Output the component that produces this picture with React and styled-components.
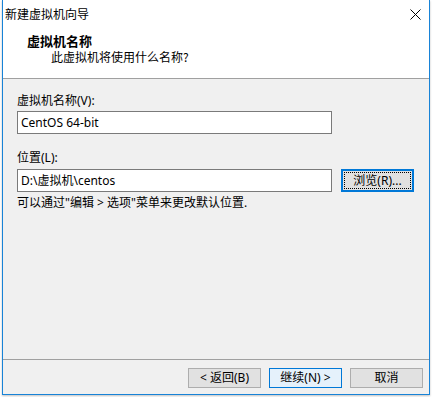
import React from "react";
import styled, { createGlobalStyle } from "styled-components";

const Global = createGlobalStyle`
  html, body { margin: 0; padding: 0; background: #ffffff; }
  body { font-family: "Noto Sans", "Noto Sans CJK SC", sans-serif; font-size: 12px; color: #000; }
  * { box-sizing: border-box; }
`;

const Page = styled.div`
  width: 432px;
  height: 397px;
  padding-left: 2px;
  background: #ffffff;
  overflow: hidden;
`;

const Window = styled.div`
  width: 428px;
  height: 395px;
  display: flex;
  flex-direction: column;
  border: 1px solid #1883d7;
  border-top: none;
  background: #f0f0f0;
  box-shadow: 0 1px 2px rgba(0, 0, 0, 0.25);
`;

const TitleBar = styled.div`
  height: 30px;
  flex: none;
  display: flex;
  align-items: center;
  justify-content: space-between;
  padding: 0 8px 2px 2px;
  background: #ffffff;
`;

const Title = styled.span`
  font-size: 12px;
  line-height: 14px;
  font-family: "Noto Sans CJK SC", sans-serif;
`;

const Header = styled.div`
  height: 49px;
  flex: none;
  background: #ffffff;
  border-bottom: 1px solid #a0a0a0;
  padding: 3px 0 0 24px;
  display: flex;
  flex-direction: column;
`;

const HeaderTitle = styled.div`
  font-family: "Noto Sans CJK SC", sans-serif;
  font-weight: 700;
  font-size: 13px;
  line-height: 16px;
`;

const HeaderSub = styled.div`
  font-family: "Noto Sans CJK SC", sans-serif;
  font-size: 12px;
  line-height: 16px;
  padding-left: 24px;
`;

const Body = styled.div`
  flex: 1;
  padding: 14px 0 0 14px;
  display: flex;
  flex-direction: column;
`;

const Label = styled.div`
  font-family: "Noto Sans", "Noto Sans CJK SC", sans-serif;
  font-size: 12px;
  line-height: 16px;
  height: 16px;
  margin-bottom: ${(p) => p.$mb || 2}px;
`;

const Row = styled.div`
  display: flex;
  align-items: center;
  gap: 9px;
`;

const Input = styled.div`
  width: 315px;
  height: 23px;
  border: 1px solid #7a7a7a;
  background: #ffffff;
  padding-left: 3px;
  display: flex;
  align-items: center;
  font-family: "Noto Sans", "Noto Sans CJK SC", sans-serif;
  font-size: 12px;
  line-height: 14px;
  margin-bottom: ${(p) => p.$mb || 0}px;
`;

const Button = styled.div`
  width: 73px;
  height: ${(p) => p.$h || 20}px;
  display: flex;
  align-items: center;
  justify-content: center;
  position: relative;
  background: ${(p) => (p.$primary ? "#e5f1fb" : "#e1e1e1")};
  border: ${(p) => (p.$focus ? "2px solid #0078d7" : p.$primary ? "1px solid #0078d7" : "1px solid #adadad")};
  font-family: "Noto Sans", "Noto Sans CJK SC", sans-serif;
  font-size: 12px;
  line-height: 14px;
`;

const FocusRect = styled.div`
  position: absolute;
  inset: 1px;
  border: 1px dotted #000;
`;

const Hint = styled.div`
  margin-top: 3px;
  font-family: "Noto Sans", "Noto Sans CJK SC", sans-serif;
  font-size: 12px;
  line-height: 16px;
`;

const Separator = styled.div`
  height: 1px;
  flex: none;
  background: #a0a0a0;
`;

const Footer = styled.div`
  height: 34px;
  flex: none;
  display: flex;
  justify-content: flex-end;
  align-items: flex-start;
  gap: 8px;
  padding: 8px 6px 0 0;
`;

/* access-key letter; Windows hides the underline until Alt is pressed */
const Mnemonic = styled.span`
  text-decoration: none;
`;

const CloseIcon = () => (
  <svg width="11" height="11" viewBox="0 0 11 11">
    <path d="M0.5 0.5 L10.5 10.5 M10.5 0.5 L0.5 10.5" stroke="#000" strokeWidth="1" fill="none" />
  </svg>
);

export default function App() {
  return (
    <>
      <Global />
      <Page>
        <Window>
          <TitleBar>
            <Title>新建虚拟机向导</Title>
            <CloseIcon />
          </TitleBar>
          <Header>
            <HeaderTitle>虚拟机名称</HeaderTitle>
            <HeaderSub>此虚拟机将使用什么名称?</HeaderSub>
          </Header>
          <Body>
            <Label>虚拟机名称(<Mnemonic>V</Mnemonic>):</Label>
            <Input $mb={16}>CentOS 64-bit</Input>
            <Label $mb={3}>位置(<Mnemonic>L</Mnemonic>):</Label>
            <Row>
              <Input>D:\虚拟机\centos</Input>
              <Button $focus $h={23}>
                <FocusRect />
                浏览(<Mnemonic>R</Mnemonic>)...
              </Button>
            </Row>
            <Hint>可以通过"编辑 &gt; 选项"菜单来更改默认位置.</Hint>
          </Body>
          <Separator />
          <Footer>
            <Button>&lt; 返回(<Mnemonic>B</Mnemonic>)</Button>
            <Button $primary>继续(<Mnemonic>N</Mnemonic>) &gt;</Button>
            <Button>取消</Button>
          </Footer>
        </Window>
      </Page>
    </>
  );
}
